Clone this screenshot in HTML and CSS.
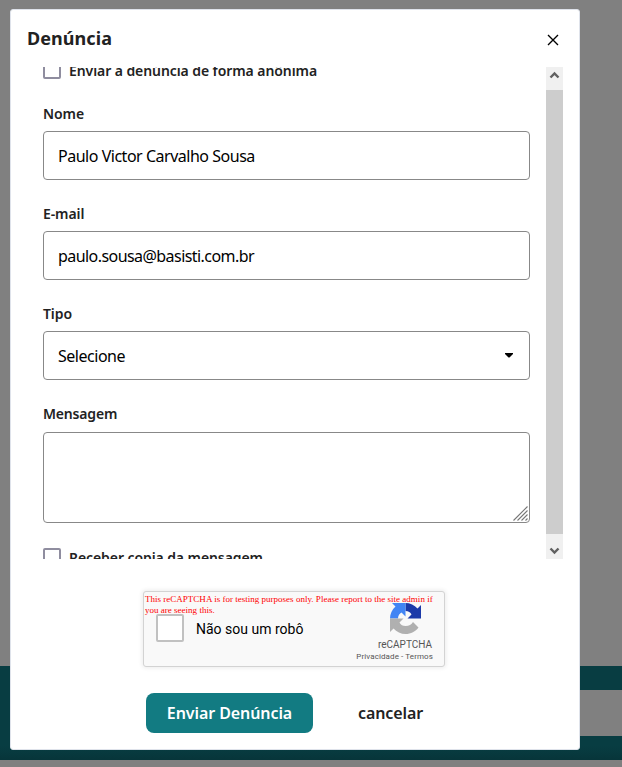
FILE: index.html
```html
<!DOCTYPE html>
<html lang="pt-BR">
<head>
<meta charset="utf-8">
<title>Denúncia</title>
<link rel="stylesheet" href="styles.css">
</head>
<body>
<div class="backdrop">
  <div class="band"><div class="band-gap"></div></div>
</div>
<main class="modal">
  <header class="modal-header">
    <h1 class="title"><span class="t-title">Denúncia</span></h1>
    <svg class="close" width="12" height="12" viewBox="0 0 12 12"><path d="M1 1 11 11M11 1 1 11" stroke="#000" stroke-width="1.35" fill="none"/></svg>
  </header>
  <div class="scroller">
    <div class="content">
      <div class="check check-top"><span class="box"></span><span class="check-text">Enviar a denúncia de forma anônima</span></div>
      <div class="field"><div class="label">Nome</div><div class="input"><span class="t-name">Paulo Victor Carvalho Sousa</span></div></div>
      <div class="field"><div class="label">E-mail</div><div class="input"><span class="t-mail">paulo.sousa@basisti.com.br</span></div></div>
      <div class="field"><div class="label">Tipo</div><div class="input"><span class="t-select">Selecione</span><svg class="caret" width="8" height="5" viewBox="0 0 8 5"><path d="M0 0H8V1L4.5 4.4H3.5L0 1Z"/></svg></div></div>
      <div class="field"><div class="label label-message">Mensagem</div><div class="textarea"><svg width="15" height="15" viewBox="0 0 15 15"><path d="M.5 14.5 14.5.5M4.5 14.5l10-10M8.500 14.500l6-6M12.500 14.500l2-2" stroke="#777" stroke-width="1.1" fill="none"/></svg></div></div>
      <div class="check"><span class="box"></span><span class="check-text">Receber copia da mensagem</span></div>
    </div>
    <div class="scrollbar">
      <svg class="arrow" width="17" height="23" viewBox="0 0 17 23"><path d="M4.500 10.500 8.500 6.500l4 4" stroke="#606060" stroke-width="2.400" fill="none"/></svg>
      <div class="thumb"></div>
      <svg class="arrow" width="17" height="25" viewBox="0 0 17 25"><path d="M4.500 14.500l4 4 4-4" stroke="#606060" stroke-width="2.400" fill="none"/></svg>
    </div>
  </div>
  <div class="captcha">
    <div class="notice"><span class="t-notice">This reCAPTCHA is for testing purposes only. Please report to the site admin if</span><br><span class="t-notice2">you are seeing this.</span></div>
    <div class="robot"><span class="robot-box"></span><span class="t-robot">Não sou um robô</span></div>
    <div class="brand">
      <svg width="31" height="31" viewBox="0 0 62 62">
        <path fill="#1c3aa9" d="M62 31V4l-7 7C49 4 40 0 31 0v16c6 0 10 3 12 7l-8 8z"/>
        <path fill="#4285f4" d="M31 0H4l7 7C4 13 0 22 0 31h16c0-6 3-10 7-12l8 8z"/>
        <path fill="#b0b0b0" d="M0 31v27l7-7c6 7 15 11 24 11 11 0 20-5 26-13L46 38c-3 5-8 8-15 8-5 0-10-2-12-7l8-8z"/>
      </svg>
      <div class="brand-name"><span class="t-brand">reCAPTCHA</span></div>
      <div class="brand-links"><span class="t-links">Privacidade - Termos</span></div>
    </div>
  </div>
  <footer class="actions">
    <div class="submit"><span class="t-submit">Enviar Denúncia</span></div>
    <div class="cancel"><span class="t-cancel">cancelar</span></div>
  </footer>
</main>
</body>
</html>
```
FILE: styles.css
```css
* { box-sizing: border-box; }
body { margin: 0; height: 767px; overflow: hidden; background: #808080; font-family: "Noto Sans", "Open Sans", sans-serif; color: #222; }
svg { display: block; flex: none; }
span { white-space: nowrap; }
.backdrop { position: absolute; inset: 0; padding-top: 666px; }
.band { height: 94px; padding-top: 24px; background: linear-gradient(#083d42 85%, #07353a); }
.band-gap { height: 46px; margin-left: 300px; background: #808080; }
.modal { position: relative; width: 570px; height: 741px; margin: 9px 0 0 10px; padding: 0 16px; background: #fff; border: 1px solid #dfe3eb; border-radius: 3px; }
.modal-header { height: 57px; display: flex; justify-content: space-between; align-items: center; padding: 0 4px 2px 0; }
.title { margin: 0; font-size: 18px; line-height: 24px; font-weight: 700; letter-spacing: .07px; }
.close { margin-top: 4px; }
.scroller { height: 492px; display: flex; overflow: hidden; }
.content { width: 519px; padding: 0 16px; }
.check { display: flex; align-items: center; gap: 8px; height: 18px; font-size: 14px; line-height: 18px; font-weight: 600; letter-spacing: -.08px; }
.check-text { padding-top: 2px; }
.check-top { margin-top: -6px; margin-bottom: 25px; }
.box { width: 18px; height: 18px; border: 2px solid #8f8d9f; border-radius: 2px; }
.field { margin-bottom: 24px; }
.label { height: 27px; padding-bottom: 7px; font-size: 14px; line-height: 20px; font-weight: 600; letter-spacing: -.1px; }
.label-message { height: 28px; letter-spacing: -.18px; }
.input { height: 49px; display: flex; align-items: center; justify-content: space-between; padding: 1px 16px 0 14px; border: 1px solid #888; border-radius: 4px; color: #000; font-size: 16px; letter-spacing: -.48px; }
.t-mail { letter-spacing: -.56px; }
.caret { margin-top: -2px; }
.textarea { height: 91px; display: flex; align-items: flex-end; justify-content: flex-end; padding: 1px; border: 1px solid #888; border-radius: 4px; }
.field:nth-of-type(5) { margin-bottom: 25px; }
.scrollbar { width: 17px; display: flex; flex-direction: column; background: #f0f0f0; }
.thumb { flex: 1; background: #cdcdcd; }
.captcha { position: relative; width: 302px; height: 76px; margin: 32px 0 0 116px; background: #f9f9f9; border: 1px solid #d3d3d3; border-radius: 3px; box-shadow: 0 0 4px 1px rgba(0,0,0,.08); }
.notice { position: absolute; left: 1px; top: 2px; color: #f00; font: 9px/11px "Liberation Serif", serif; z-index: 1; letter-spacing: .01px; }
.robot { display: flex; align-items: center; gap: 12px; height: 28px; margin: 22px 0 0 12px; color: #000; font: 14px/20px Roboto, sans-serif; }
.t-robot { padding-top: 2px; }
.robot-box { width: 28px; height: 28px; border: 2px solid #c1c1c1; border-radius: 2px; background: #fff; }
.brand { position: absolute; right: 11px; top: 11px; width: 80px; display: flex; flex-direction: column; align-items: flex-end; color: #555; font-family: Roboto, sans-serif; }
.brand svg { margin-right: 12px; }
.brand-name { margin: 5px 1px 0 0; font-size: 10px; line-height: 12px; }
.brand-links { font-size: 8px; line-height: 11px; letter-spacing: .1px; }
.actions { display: flex; align-items: center; gap: 45px; margin: 26px 0 0 119px; font-size: 16px; font-weight: 600; letter-spacing: -.08px; }
.submit { width: 167px; height: 40px; display: flex; align-items: center; justify-content: center; background: #127b82; color: #fff; border-radius: 8px; }
```
